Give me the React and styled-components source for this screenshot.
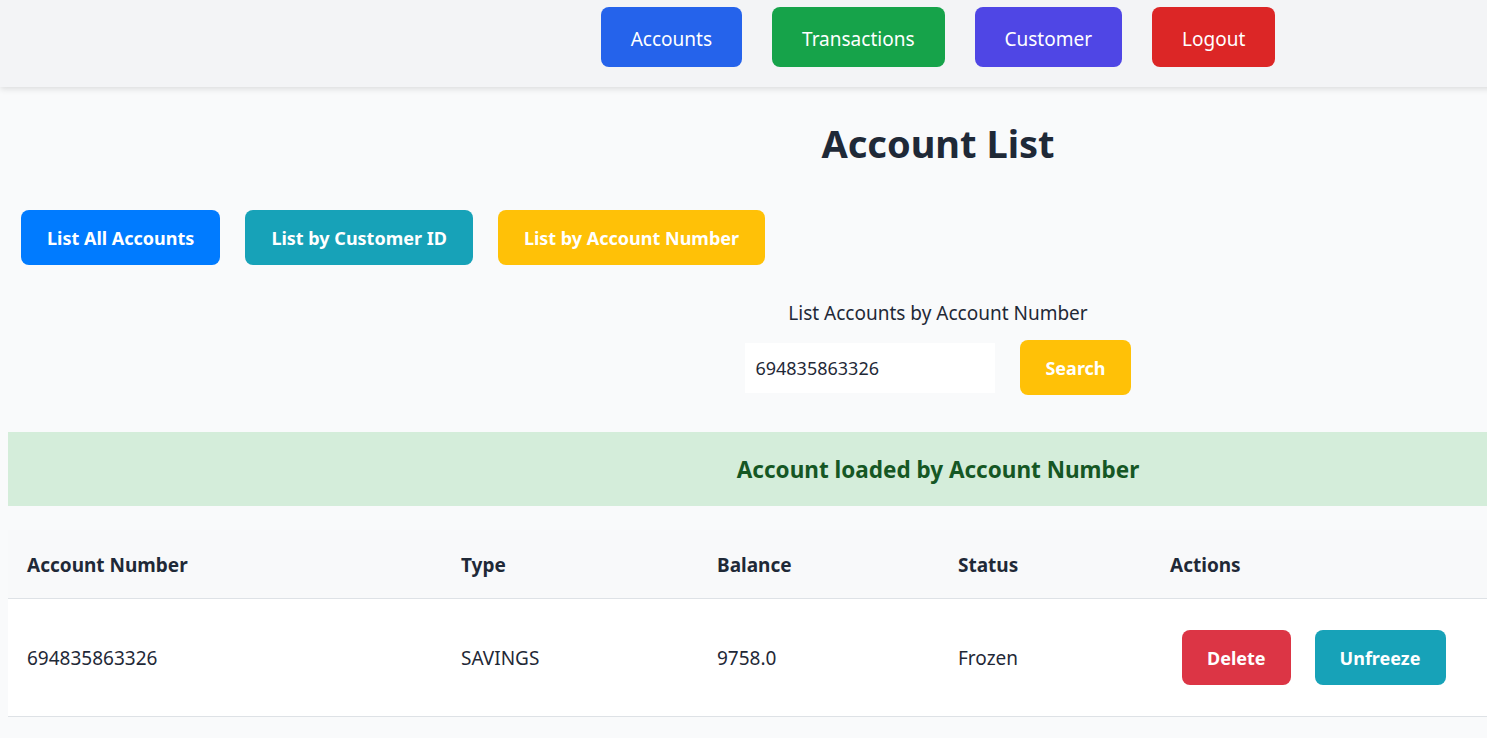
import React from 'react'
import styled, { createGlobalStyle } from 'styled-components'

const GlobalStyle = createGlobalStyle`
  html, body {
    margin: 0;
    padding: 0;
    background: #f9fafb;
    font-family: "Noto Sans", "Open Sans", sans-serif;
    color: #1f2937;
  }
`

const Page = styled.div`
  width: 1876px;
  min-height: 738px;
  background: #f9fafb;
`

const NavBar = styled.nav`
  display: flex;
  justify-content: center;
  gap: 30px;
  padding: 7px 0 20px;
  background: #f3f4f6;
  box-shadow: 0 2px 6px rgba(0, 0, 0, 0.12);
  position: relative;
`

const NavButton = styled.button`
  height: 60px;
  padding: 3px 30px 0;
  border: none;
  border-radius: 8px;
  background: ${p => p.$bg};
  color: #fff;
  font-family: inherit;
  font-size: 19px;
  cursor: pointer;
`

const Main = styled.main`
  padding: 0 8px;
`

const Title = styled.h1`
  margin: 0;
  padding: 27px 0 38px;
  text-align: center;
  font-size: 38px;
  font-weight: 700;
  line-height: 58px;
  color: #1f2937;
`

const FilterRow = styled.div`
  display: flex;
  gap: 25px;
  padding-left: 13px;
`

const ActionButton = styled.button`
  height: 55px;
  padding: 0 ${p => p.$px || 26}px;
  border: none;
  border-radius: 8px;
  background: ${p => p.$bg};
  color: #fff;
  font-family: inherit;
  font-size: 18px;
  font-weight: 700;
  cursor: pointer;
`

const SearchBlock = styled.div`
  display: flex;
  flex-direction: column;
  align-items: center;
  padding: 35px 0 37px;
`

const SearchLabel = styled.label`
  font-size: 19px;
  line-height: 26px;
  color: #1f2937;
  margin-bottom: 14px;
`

const SearchRow = styled.div`
  display: flex;
  align-items: center;
  gap: 25px;
`

const SearchInput = styled.input`
  width: 250px;
  height: 50px;
  box-sizing: border-box;
  padding: 0 10px;
  border: none;
  background: #fff;
  font-family: inherit;
  font-size: 18px;
  color: #1f2937;
  outline: none;
`

const Alert = styled.div`
  height: 74px;
  display: flex;
  align-items: center;
  justify-content: center;
  background: #d4edda;
  color: #155724;
  font-size: 22.5px;
  font-weight: 700;
`

const Table = styled.table`
  width: 100%;
  margin-top: 24px;
  border-collapse: collapse;
  table-layout: fixed;
`

const HeadCell = styled.th`
  box-sizing: border-box;
  width: ${p => p.$w ? `${p.$w}px` : 'auto'};
  height: 68px;
  padding: 2px 19px 0;
  text-align: left;
  font-size: 19px;
  font-weight: 700;
  background: #f8f9fa;
  border-bottom: 1px solid #dee2e6;
`

const Row = styled.tr`
  background: #fff;
  border-bottom: 1px solid #dee2e6;
`

const Cell = styled.td`
  height: 116px;
  padding: 1px 19px 0;
  font-size: 19px;
  color: #1f2937;
`

const RowButton = styled(ActionButton)`
  margin: 0 12px;
  padding: 0 25px;
`

export default function App () {
  return (
    <Page>
      <GlobalStyle />
      <NavBar>
        <NavButton $bg='#2563eb'>Accounts</NavButton>
        <NavButton $bg='#16a34a'>Transactions</NavButton>
        <NavButton $bg='#4f46e5'>Customer</NavButton>
        <NavButton $bg='#dc2626'>Logout</NavButton>
      </NavBar>
      <Main>
        <Title>Account List</Title>
        <FilterRow>
          <ActionButton $bg='#007bff'>List All Accounts</ActionButton>
          <ActionButton $bg='#17a2b8'>List by Customer ID</ActionButton>
          <ActionButton $bg='#ffc107'>List by Account Number</ActionButton>
        </FilterRow>
        <SearchBlock>
          <SearchLabel>List Accounts by Account Number</SearchLabel>
          <SearchRow>
            <SearchInput defaultValue='694835863326' />
            <ActionButton $bg='#ffc107' $px={25}>Search</ActionButton>
          </SearchRow>
        </SearchBlock>
        <Alert>Account loaded by Account Number</Alert>
        <Table>
          <thead>
            <tr>
              <HeadCell $w={434}>Account Number</HeadCell>
              <HeadCell $w={256}>Type</HeadCell>
              <HeadCell $w={241}>Balance</HeadCell>
              <HeadCell $w={212}>Status</HeadCell>
              <HeadCell>Actions</HeadCell>
            </tr>
          </thead>
          <tbody>
            <Row>
              <Cell>694835863326</Cell>
              <Cell>SAVINGS</Cell>
              <Cell>9758.0</Cell>
              <Cell>Frozen</Cell>
              <Cell>
                <RowButton $bg='#dc3545'>Delete</RowButton>
                <RowButton $bg='#17a2b8'>Unfreeze</RowButton>
              </Cell>
            </Row>
          </tbody>
        </Table>
      </Main>
    </Page>
  )
}
